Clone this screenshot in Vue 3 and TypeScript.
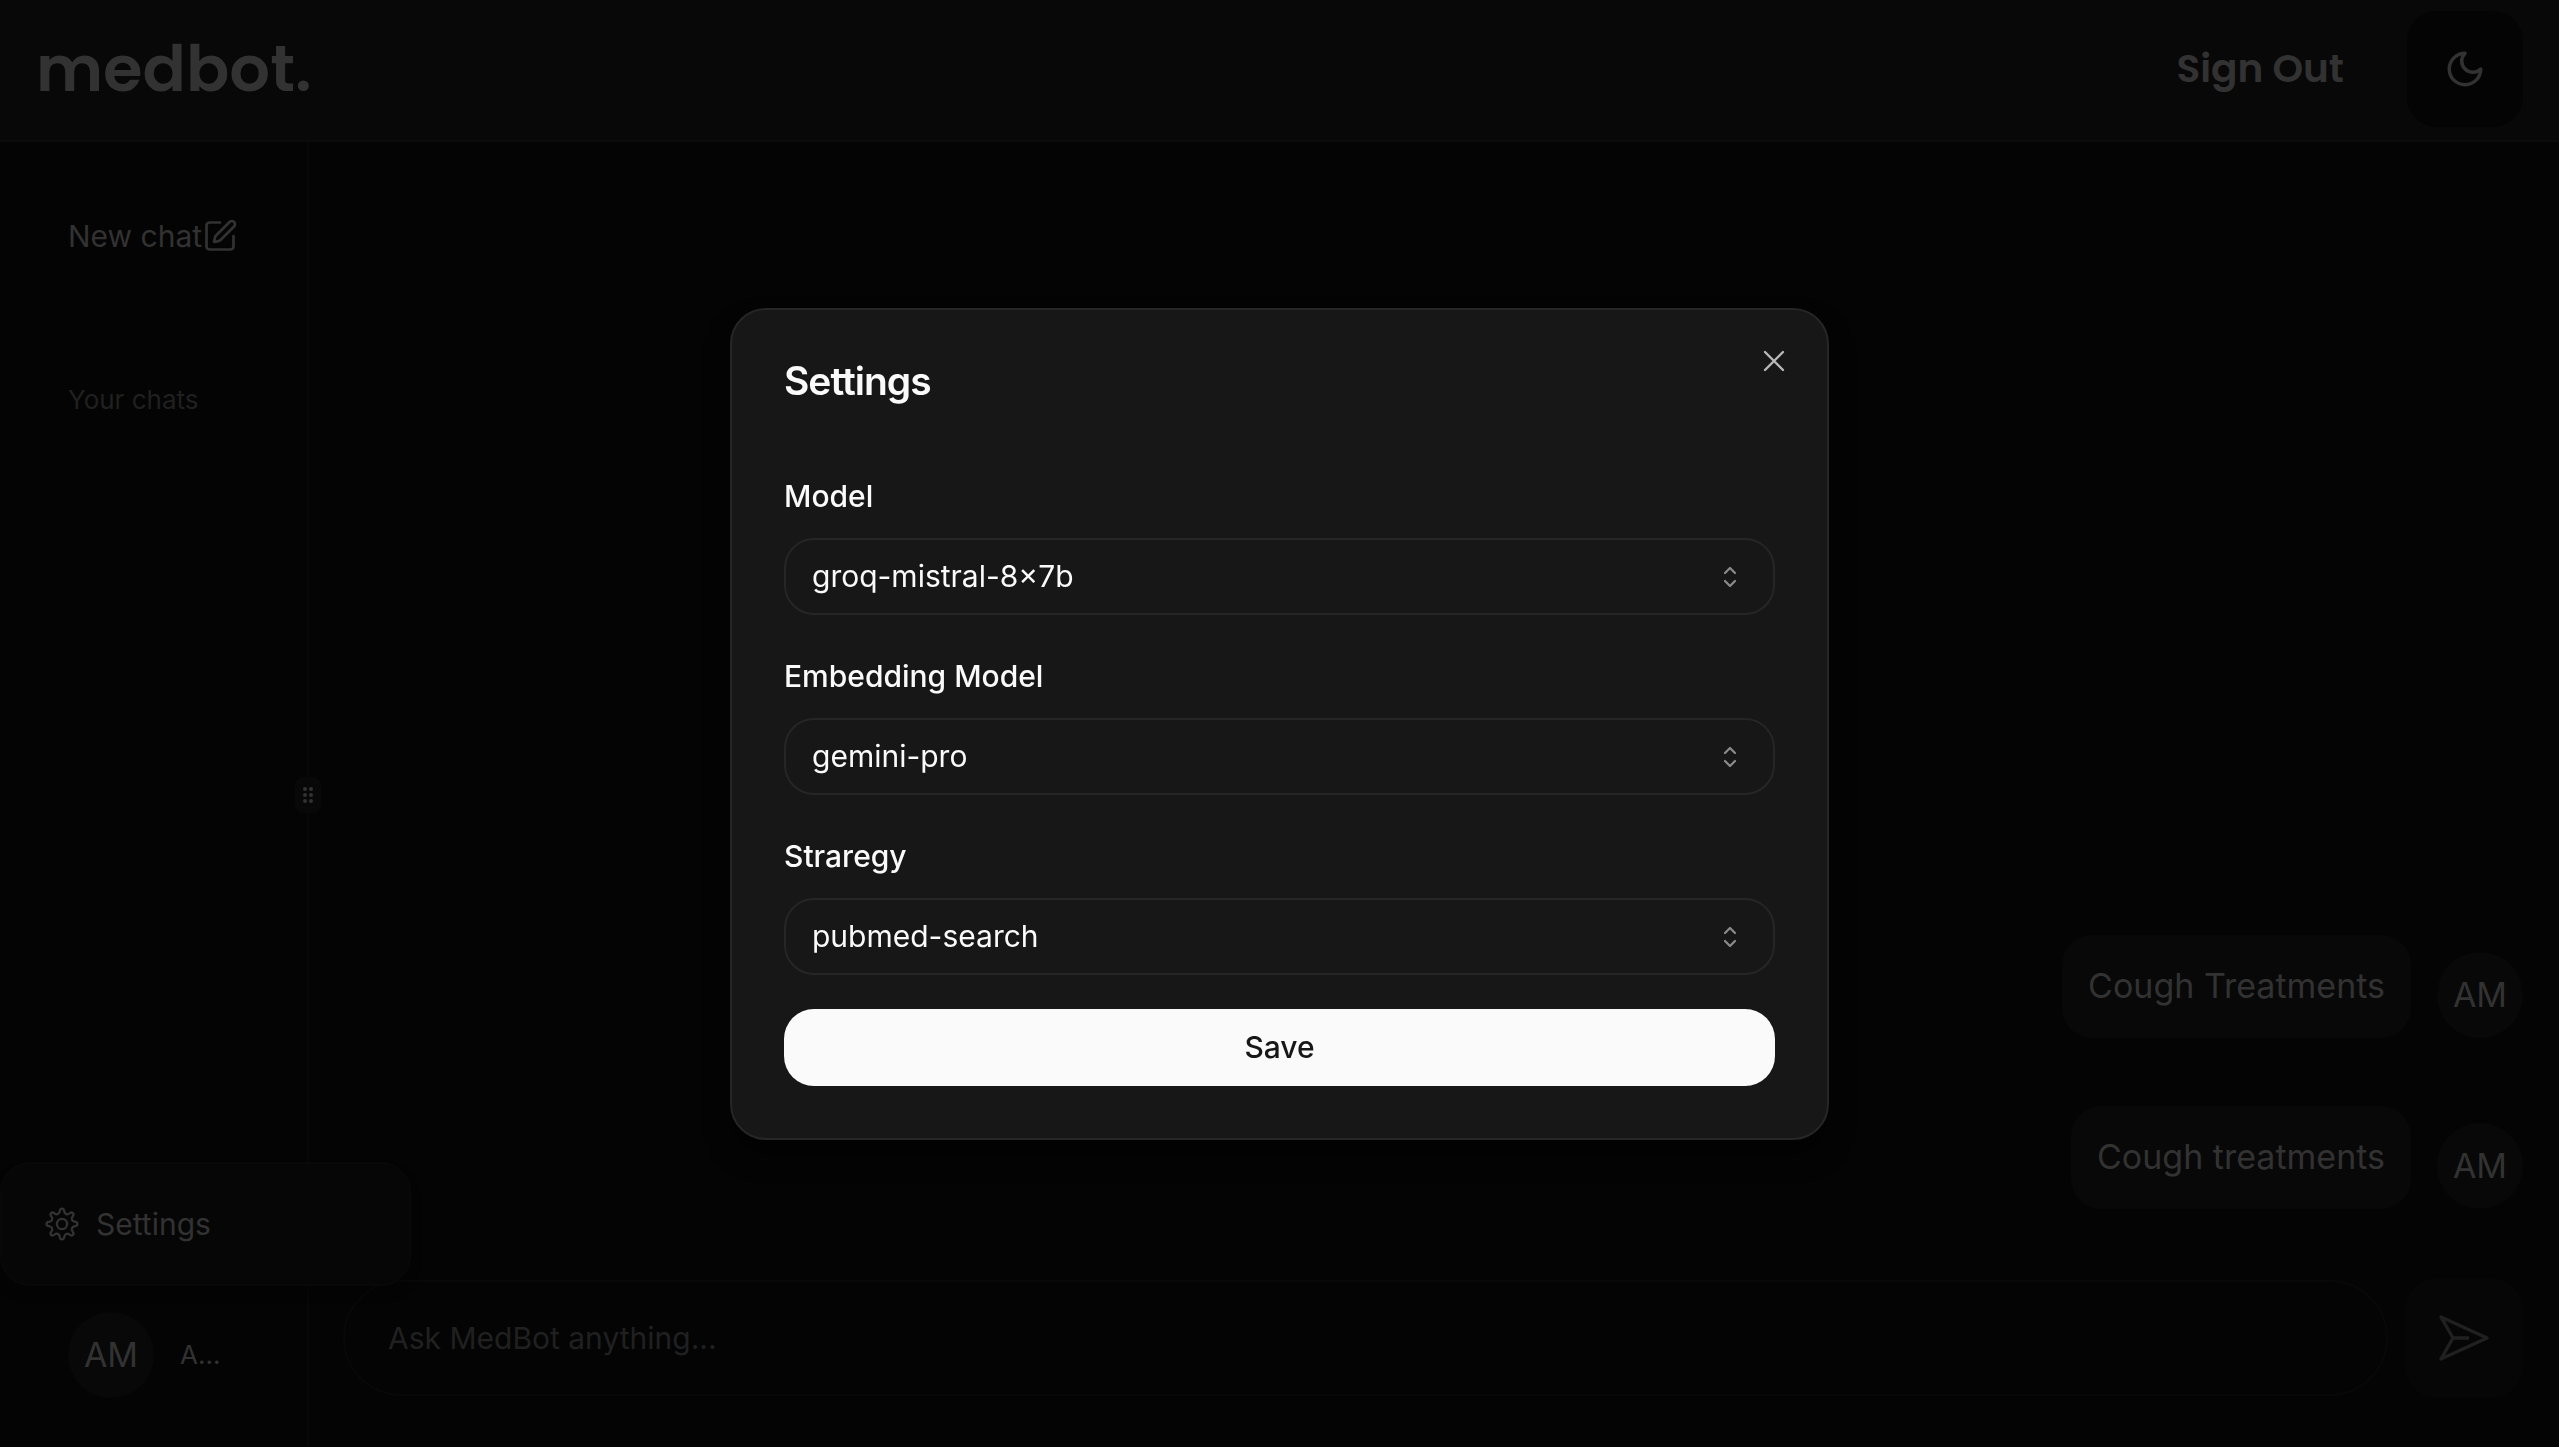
<script setup lang="ts">
import { reactive, ref } from 'vue'

interface Field {
  id: 'model' | 'embedding' | 'strategy'
  label: string
  options: string[]
}

const fields: Field[] = [
  { id: 'model', label: 'Model', options: ['groq-mistral-8×7b'] },
  { id: 'embedding', label: 'Embedding Model', options: ['gemini-pro'] },
  { id: 'strategy', label: 'Straregy', options: ['pubmed-search'] },
]

const settings = reactive({
  model: 'groq-mistral-8×7b',
  embedding: 'gemini-pro',
  strategy: 'pubmed-search',
})

const messages = ['Cough Treatments', 'Cough treatments']
const draft = ref('')
const open = ref(true)
</script>

<template>
  <div class="app">
    <header class="topbar">
      <a class="brand" href="#">medbot.</a>
      <div class="actions">
        <button class="signout" type="button">Sign Out</button>
        <button class="theme" type="button" aria-label="Toggle theme">
          <svg width="42" height="42" viewBox="0 0 24 24" fill="none" stroke="currentColor" stroke-width="2" stroke-linecap="round" stroke-linejoin="round">
            <path d="M12 3a6 6 0 0 0 9 9 9 9 0 1 1-9-9Z" />
          </svg>
        </button>
      </div>
    </header>

    <div class="body">
      <aside class="sidebar">
        <button class="newchat" type="button">
          <span>New chat</span>
          <svg width="36" height="36" viewBox="0 0 24 24" fill="none" stroke="currentColor" stroke-width="1.8" stroke-linecap="round" stroke-linejoin="round">
            <path d="M12 3H5a2 2 0 0 0-2 2v14a2 2 0 0 0 2 2h14a2 2 0 0 0 2-2v-7" />
            <path d="M18.375 2.625a1 1 0 0 1 3 3l-9.013 9.014a2 2 0 0 1-.853.505l-2.873.84a.5.5 0 0 1-.62-.62l.84-2.873a2 2 0 0 1 .506-.852z" />
          </svg>
        </button>
        <h2 class="caption">Your chats</h2>
        <div class="account">
          <span class="avatar">AM</span>
          <span class="name">A...</span>
          <div class="menu">
            <svg width="34" height="34" viewBox="0 0 24 24" fill="none" stroke="currentColor" stroke-width="1.6" stroke-linejoin="round">
              <circle cx="12" cy="12" r="3.6" />
              <path d="M10.400 3.200 Q10.500 1.100 12 1.100 T13.600 3.200 Q13.800 4.500 15 5 T17.200 4.600 Q18.700 3.300 19.700 4.300 T19.400 6.800 Q18.500 8 19 9 T20.800 10.400 Q22.900 10.500 22.900 12 T20.800 13.600 Q19.500 13.800 19 15 T19.400 17.200 Q20.700 18.700 19.700 19.700 T17.200 19.400 Q16 18.500 15 19 T13.600 20.800 Q13.500 22.900 12 22.900 T10.400 20.800 Q10.200 19.500 9 19 T6.800 19.400 Q5.300 20.700 4.300 19.700 T4.600 17.200 Q5.500 16 5 15 T3.200 13.600 Q1.100 13.500 1.100 12 T3.200 10.400 Q4.500 10.200 5 9 T4.600 6.800 Q3.300 5.300 4.300 4.300 T6.800 4.600 Q8 5.500 9 5 T10.400 3.200Z" />
            </svg>
            <a href="#">Settings</a>
          </div>
        </div>
        <span class="grip">
          <i v-for="n in 6" :key="n"></i>
        </span>
      </aside>

      <main class="chat">
        <ul class="messages">
          <li v-for="text in messages" :key="text">
            <p class="bubble">{{ text }}</p>
            <span class="avatar">AM</span>
          </li>
        </ul>
        <form class="composer" @submit.prevent>
          <input v-model="draft" type="text" placeholder="Ask MedBot anything..." aria-label="Message" />
          <button type="submit" aria-label="Send">
            <svg width="52" height="48" viewBox="0 0 52 48" fill="none" stroke="currentColor" stroke-width="3.4" stroke-linejoin="round">
              <path d="M3 3 49 24 3 45 15 24ZM15 24H31" />
            </svg>
          </button>
        </form>
      </main>
    </div>

    <div v-if="open" class="overlay">
      <form class="dialog" role="dialog" aria-labelledby="dialog-title" @submit.prevent="open = false">
        <button class="close" type="button" aria-label="Close" @click="open = false">
          <svg width="22" height="22" viewBox="0 0 22 22" fill="none" stroke="currentColor" stroke-width="2.4" stroke-linecap="round">
            <path d="M2 2 20 20M20 2 2 20" />
          </svg>
        </button>
        <h1 id="dialog-title">Settings</h1>
        <div class="fields">
          <div v-for="field in fields" :key="field.id" class="field">
            <label :for="field.id">{{ field.label }}</label>
            <div class="select">
              <select :id="field.id" v-model="settings[field.id]">
                <option v-for="option in field.options" :key="option">{{ option }}</option>
              </select>
              <svg width="14" height="22" viewBox="0 0 14 22" fill="none" stroke="currentColor" stroke-width="2.2" stroke-linecap="round" stroke-linejoin="round">
                <path d="M2 7 7 2 12 7M2 15 7 20 12 15" />
              </svg>
            </div>
          </div>
        </div>
        <button class="save" type="submit">Save</button>
      </form>
    </div>
  </div>
</template>

<style>
body {
  margin: 0;
  background: #040404;
}
</style>

<style scoped>
* {
  box-sizing: border-box;
}

.app {
  min-height: 100vh;
  display: flex;
  flex-direction: column;
  background: #040404;
  color: #323232;
  font-family: Inter, "Noto Sans", sans-serif;
  font-size: 30px;
  line-height: 44px;
}

button,
input,
select {
  font: inherit;
  color: inherit;
  border: 0;
  padding: 0;
  background: none;
}

a {
  color: inherit;
  text-decoration: none;
}

svg {
  display: block;
  flex: none;
}

.topbar {
  height: 142px;
  padding: 0 36px 2px;
  display: flex;
  align-items: center;
  justify-content: space-between;
  background: #080808;
  border-bottom: 2px solid #0b0b0b;
}

.brand {
  font-family: Poppins, Inter, sans-serif;
  font-size: 64px;
  line-height: 72px;
  font-weight: 600;
}

.actions {
  display: flex;
  align-items: center;
  gap: 63px;
}

.signout {
  font-family: Poppins, Inter, sans-serif;
  font-size: 39px;
  font-weight: 600;
}

.theme {
  width: 116px;
  height: 116px;
  display: grid;
  place-items: center;
  border-radius: 30px;
  background: #040404;
}

.body {
  flex: 1;
  display: flex;
}

.sidebar {
  position: relative;
  width: 309px;
  padding: 72px 68px 49px;
  display: flex;
  flex-direction: column;
  align-items: flex-start;
  border-right: 2px solid #070707;
}

.newchat {
  display: flex;
  align-items: center;
}

.caption {
  margin: 120px 0 0;
  font-size: 26px;
  font-weight: 400;
  color: #202020;
}

.account {
  position: relative;
  margin-top: auto;
  display: flex;
  align-items: center;
  gap: 26px;
}

.name {
  font-size: 26px;
}

.avatar {
  width: 86px;
  height: 86px;
  flex: none;
  display: grid;
  place-items: center;
  border-radius: 50%;
  background: #080808;
  font-size: 34px;
}

.menu {
  position: absolute;
  z-index: 1;
  left: -68px;
  bottom: 112px;
  width: 411px;
  height: 124px;
  padding: 0 43px;
  display: flex;
  align-items: center;
  gap: 17px;
  border: 2px solid #080808;
  border-radius: 30px;
  background: #060606;
  box-shadow: 0 8px 12px rgba(0, 0, 0, 0.2);
}

.grip {
  position: absolute;
  right: -14px;
  top: 50%;
  width: 26px;
  height: 36px;
  margin-top: -18px;
  display: grid;
  grid-template-columns: 4px 4px;
  gap: 2px;
  place-content: center;
  border-radius: 8px;
  background: #080808;
}

.grip i {
  width: 4px;
  height: 4px;
  border-radius: 50%;
  background: #323232;
}

.chat {
  flex: 1;
  padding: 0 36px 50px 34px;
  display: flex;
  flex-direction: column;
  justify-content: flex-end;
}

.messages {
  margin: 0 0 70px;
  padding: 0;
  display: flex;
  flex-direction: column;
  gap: 68px;
  list-style: none;
  font-size: 34px;
}

.messages li {
  display: flex;
  justify-content: flex-end;
  align-items: flex-end;
  gap: 26px;
}

.bubble {
  margin: 0;
  height: 103px;
  padding: 29px 26px;
  border-radius: 30px;
  background: #080808;
}

.composer {
  display: flex;
  align-items: center;
  gap: 17px;
}

.composer input {
  flex: 1;
  min-width: 0;
  height: 116px;
  padding: 0 43px;
  border: 2px solid #080808;
  border-radius: 58px;
}

.composer input::placeholder {
  color: #202020;
  opacity: 1;
}

.composer button {
  width: 118px;
  height: 118px;
  display: grid;
  place-items: center;
  border-radius: 30px;
  background: #060606;
  color: #202021;
}

.overlay {
  position: fixed;
  z-index: 2;
  inset: 0;
  display: grid;
  place-items: center;
}

.dialog {
  position: relative;
  width: 1099px;
  max-width: 90%;
  padding: 52px;
  display: flex;
  flex-direction: column;
  border: 2px solid #262626;
  border-radius: 36px;
  background: #171717;
  color: #fafafa;
  box-shadow: 0 16px 24px rgba(0, 0, 0, 0.5);
}

.dialog h1 {
  margin: 0 0 74px;
  font-size: 39px;
  line-height: 38px;
  font-weight: 600;
  letter-spacing: -1px;
}

.close {
  position: absolute;
  top: 40px;
  right: 42px;
  color: #b8b8b8;
}

.fields {
  margin-bottom: 34px;
  display: flex;
  flex-direction: column;
  gap: 39px;
}

.field {
  display: flex;
  flex-direction: column;
  gap: 20px;
}

.field label {
  font-weight: 500;
}

.select {
  position: relative;
  color: #fafafa;
}

.select select {
  width: 100%;
  height: 77px;
  padding: 0 26px;
  appearance: none;
  border: 2px solid #262626;
  border-radius: 30px;
}

.select svg {
  position: absolute;
  right: 38px;
  top: 28px;
  color: #8b8b8b;
  pointer-events: none;
}

.save {
  height: 77px;
  border-radius: 30px;
  background: #fafafa;
  color: #171717;
  font-weight: 500;
}
</style>
